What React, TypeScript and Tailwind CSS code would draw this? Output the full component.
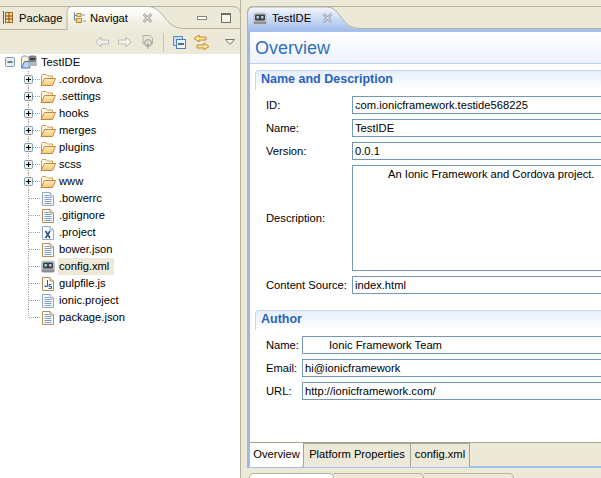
import React from "react";

const font = { fontFamily: '"Liberation Sans", Arial, sans-serif' };

function FolderIcon() {
  return (
    <svg width="16" height="13" viewBox="0 0 16 13" className="shrink-0">
      <defs>
        <linearGradient id="ff" x1="0" y1="0" x2="0" y2="1">
          <stop offset="0" stopColor="#fdeec4" />
          <stop offset="1" stopColor="#f5c670" />
        </linearGradient>
      </defs>
      <path d="M1.5 11.5V2.5L2.5 1.5H6L7.5 3H12.5V5.5" fill="#fff8e4" stroke="#cf9a4e" />
      <path d="M1 12.5L4.5 5.5H15.5L12.5 12.5Z" fill="url(#ff)" stroke="#c4873a" />
    </svg>
  );
}

function ProjectIcon() {
  return (
    <svg width="16" height="15" viewBox="0 0 16 15" className="shrink-0">
      <path d="M0.5 12.5V3L2 1H5.5L7 2.5H11V6" fill="#fdf4d8" stroke="#7f9cc8" />
      <path d="M0.5 13L3.5 6.5H11L8.5 13Z" fill="#bcd3f2" stroke="#3f6fb0" />
      <rect x="7.5" y="0.5" width="8" height="7" rx="2" fill="#7d8186" />
      <rect x="9" y="3" width="5" height="2" fill="#3a3e44" />
      <rect x="7" y="7" width="9" height="4" rx="1" fill="#b3b6ba" />
    </svg>
  );
}

function FileIcon({ edge = "#b0904e", kind = "lines" }: { edge?: string; kind?: "lines" | "x" | "js" }) {
  return (
    <svg width="12" height="14" viewBox="0 0 12 14" className="shrink-0">
      <path d="M0.5 0.5H8L11.5 4V13.5H0.5Z" fill="#fbfcff" stroke={edge} />
      <path d="M8 0.5V4H11.5" fill="#dfe8f6" stroke={edge} />
      {kind === "lines" && <path d="M2.5 3.5H7M2.5 5.5H9.5M2.5 7.5H9.5M2.5 9.5H9.5M2.5 11.5H9.5" stroke="#7d9ed2" />}
      {kind === "x" && <path d="M3.5 5L8 12M8 5L3.5 12" stroke="#2f4f86" strokeWidth="1.6" fill="none" />}
      {kind === "js" && <path d="M5.5 3V9.5H3V8M7 7.5H9.5M7 7.5V9.5H9.5V11.5H6.5" stroke="#2f5fae" fill="none" />}
    </svg>
  );
}

function RobotIcon() {
  return (
    <svg width="14" height="13" viewBox="0 0 14 13" className="shrink-0">
      <rect x="0" y="0.5" width="14" height="12.5" rx="3" fill="#c3c5c8" />
      <rect x="2" y="2.5" width="10" height="6" rx="1" fill="#3c4046" />
      <rect x="3.5" y="4" width="2.5" height="2.5" fill="#a9cfe0" />
      <rect x="8" y="4" width="2.5" height="2.5" fill="#a9cfe0" />
      <rect x="1" y="9.5" width="12" height="2.5" fill="#8d9095" />
    </svg>
  );
}

function Gutter({ box, last }: { box: boolean; last?: boolean }) {
  return (
    <svg width="40" height="17" viewBox="0 0 40 17" className="shrink-0">
      <path d={last ? "M28.5 0V8.5" : "M28.5 0V17"} stroke="#a5a38f" strokeDasharray="1 1" />
      <path d="M29 8.5H40" stroke="#a5a38f" strokeDasharray="1 1" />
      {box && (
        <g>
          <rect x="24.5" y="4.5" width="8" height="8" rx="1" fill="#efeee2" stroke="#7f9db9" />
          <path d="M26 8.5H31M28.5 6V11" stroke="#000000" />
        </g>
      )}
    </svg>
  );
}

const folders = [".cordova", ".settings", "hooks", "merges", "plugins", "scss", "www"];

function TreeRow({ label, icon, box, selected, last }: { label: string; icon: React.ReactNode; box?: boolean; selected?: boolean; last?: boolean }) {
  return (
    <div className="flex h-[17px] items-center">
      <Gutter box={!!box} last={last} />
      <div className="flex w-[18px] shrink-0 justify-center pr-[2px]">{icon}</div>
      <span className={`flex h-[17px] items-center px-[1px] text-[11.2px] text-black ${selected ? "bg-[#ece9d8] pr-[5px]" : ""}`}>{label}</span>
    </div>
  );
}

function Field({ label, value, labelW, mt, indent, caret }: { label: string; value: string; labelW: number; mt: string; indent?: boolean; caret?: boolean }) {
  return (
    <div className={`flex h-[18px] items-center ${mt}`}>
      <span className="shrink-0 pl-[16px] text-[11.2px] text-black" style={{ width: labelW }}>{label}</span>
      <div className="relative flex h-[18px] w-[400px] shrink-0 items-center border border-[#7598b8] bg-white pl-[2px] text-[11.2px] text-black">
        {indent && <span className="w-[24px] shrink-0" />}
        {value}
        {caret && <span className="absolute left-[2px] top-[7px] h-[2px] w-[2px] bg-white" />}
      </div>
    </div>
  );
}

function SectionHead({ title }: { title: string }) {
  return (
    <div className="ml-[5px] flex h-[20px] items-center rounded-tl-[4px] border-l border-t border-[#c5d6f0] bg-gradient-to-b from-[#e6eefb] to-white pb-[3px] pl-[5px] text-[12.5px] font-bold text-[#2a63bd]">
      {title}
    </div>
  );
}

function BottomTab({ label, w, active }: { label: string; w: string; active?: boolean }) {
  return (
    <div className={`flex h-[24px] items-center justify-center border-r pb-[2px] text-[11.2px] text-black ${w} ${active ? "rounded-br-[3px] border-[#a6a38f] bg-white" : "border-t border-[#a6a38f] bg-[#ece9d8]"}`}>
      {label}
    </div>
  );
}

export default function App() {
  return (
    <div className="flex h-[478px] w-[601px] overflow-hidden bg-[#ece9d8]" style={font}>
      {/* Left view */}
      <div className="flex h-full w-[241px] shrink-0 flex-col border-r border-[#b4b19c]">
        <div className="relative h-[30px] shrink-0">
          <svg width="241" height="30" viewBox="0 0 241 30" className="absolute left-0 top-0">
            <defs>
              <linearGradient id="lt" x1="0" y1="0" x2="0" y2="1">
                <stop offset="0" stopColor="#ffffff" />
                <stop offset="1" stopColor="#ece9d8" />
              </linearGradient>
            </defs>
            <path d="M0 6.5H232Q240.5 6.5 240.5 14V30" fill="none" stroke="#b4b19c" />
            <path d="M67 30V12Q67 6.5 73 6.5H148C164 6.5 164 28.5 184 28.5H240" fill="url(#lt)" stroke="#b4b19c" />
            <path d="M0 29.5H67" stroke="#b4b19c" />
          </svg>
          <div className="relative flex h-[30px] items-center pt-[6px] text-[11.2px] text-black">
            <div className="flex w-[67px] items-center pl-[3px]">
              <svg width="10" height="13" viewBox="0 0 10 13" className="mr-[6px] shrink-0">
                <path d="M0.5 0V13" stroke="#3d6a8f" />
                <rect x="2.5" y="1.5" width="7" height="10" fill="#f4d9a4" stroke="#a86818" />
                <path d="M2.5 5H9.5M2.5 8H9.5M6 1.5V11.5" stroke="#8a4a10" />
              </svg>
              <span>Package</span>
            </div>
            <div className="flex items-center pl-[6px]">
              <svg width="13" height="12" viewBox="0 0 13 12" className="mr-[4px] shrink-0">
                <path d="M1.5 0.5V3.5M1.5 3.5H4M1.5 3.5V8H3" stroke="#5a7fa8" fill="none" />
                <rect x="4" y="1.5" width="4" height="3" fill="#f5d88a" stroke="#b98a3a" />
                <rect x="3.5" y="6.5" width="5" height="4" fill="#f5d88a" stroke="#b98a3a" />
                <path d="M9 3H12M10 9H13" stroke="#6f97c9" />
              </svg>
              <span>Navigat</span>
              <svg width="11" height="10" viewBox="0 0 11 10" className="ml-[14px] shrink-0">
                <path d="M1.5 1L9.5 9M9.5 1L1.5 9" stroke="#9b9b95" strokeWidth="2.6" />
                <path d="M1.5 1L9.5 9M9.5 1L1.5 9" stroke="#ffffff" strokeWidth="1" />
              </svg>
            </div>
            <div className="ml-[44px] flex items-center gap-[14px]">
              <div className="h-[4px] w-[10px] border border-[#8a8878] bg-white" />
              <div className="h-[10px] w-[10px] border border-[#6e6d60] border-t-2 bg-[#f7f6ef]" />
            </div>
          </div>
        </div>
        <div className="flex h-[24px] shrink-0 items-center pl-[95px]">
          <svg width="14" height="12" viewBox="0 0 14 12" className="shrink-0">
            <path d="M6 1L0.8 6L6 11V8H13.5V4H6Z" fill="#f3f2ea" stroke="#bcbcb2" />
          </svg>
          <svg width="14" height="12" viewBox="0 0 14 12" className="ml-[9px] shrink-0">
            <path d="M8 1L13.2 6L8 11V8H0.5V4H8Z" fill="#f3f2ea" stroke="#bcbcb2" />
          </svg>
          <svg width="13" height="14" viewBox="0 0 13 14" className="ml-[9px] shrink-0">
            <path d="M2 0.5H9L11.5 3V9H2Z" fill="#e5e5dc" stroke="#b3b3a8" />
            <circle cx="7" cy="8" r="3.5" fill="#d8d8ce" stroke="#a3a398" />
            <path d="M7 14V9L5 11" stroke="#9a9a90" fill="none" />
          </svg>
          <div className="ml-[9px] h-[19px] w-[1px] bg-[#c9c6b4]" />
          <svg width="13" height="13" viewBox="0 0 13 13" className="ml-[9px] shrink-0">
            <rect x="0.5" y="0.5" width="9" height="9" fill="#c9dcf2" stroke="#5f8fc0" />
            <rect x="3.5" y="3.5" width="9" height="9" fill="#eef4fb" stroke="#4a80b8" />
            <path d="M5 8H11" stroke="#1f4f8a" strokeWidth="1.6" />
          </svg>
          <svg width="17" height="17" viewBox="0 0 17 17" className="ml-[7px] shrink-0">
            <path d="M6 1L1 4.5L6 8V6H13V3H6Z" fill="#fbe6a8" stroke="#c48a1e" />
            <path d="M11 9L16 12.5L11 16V14H4V11H11Z" fill="#fbe6a8" stroke="#c48a1e" />
          </svg>
          <svg width="10" height="6" viewBox="0 0 10 6" className="ml-[15px] shrink-0">
            <path d="M0.5 0.5H9.5L5 5.5Z" fill="#f8f8f2" stroke="#77766a" />
          </svg>
        </div>
        <div className="flex-1 bg-white">
          <div className="flex h-[17px] items-center pb-[1px] pl-[5px]">
            <svg width="10" height="10" viewBox="0 0 10 10" className="shrink-0">
              <rect x="0.5" y="0.5" width="9" height="9" rx="1" fill="#e8edf2" stroke="#7f9db9" />
              <path d="M2.5 5H7.5" stroke="#000000" />
            </svg>
            <div className="ml-[6px] flex w-[20px] shrink-0"><ProjectIcon /></div>
            <span className="text-[11.2px] text-black">TestIDE</span>
          </div>
          {folders.map((f) => (
            <TreeRow key={f} label={f} box icon={<FolderIcon />} />
          ))}
          <TreeRow label=".bowerrc" icon={<FileIcon edge="#8fa8c8" />} />
          <TreeRow label=".gitignore" icon={<FileIcon />} />
          <TreeRow label=".project" icon={<FileIcon edge="#8fa8c8" kind="x" />} />
          <TreeRow label="bower.json" icon={<FileIcon />} />
          <TreeRow label="config.xml" icon={<RobotIcon />} selected />
          <TreeRow label="gulpfile.js" icon={<FileIcon kind="js" />} />
          <TreeRow label="ionic.project" icon={<FileIcon edge="#8fa8c8" />} />
          <TreeRow label="package.json" icon={<FileIcon />} last />
        </div>
      </div>

      {/* Gap */}
      <div className="w-[6px] shrink-0" />

      {/* Editor */}
      <div className="flex h-full w-[354px] shrink-0 flex-col">
        <div className="relative h-[30px] shrink-0">
          <svg width="354" height="30" viewBox="0 0 354 30" className="absolute left-0 top-0">
            <defs>
              <linearGradient id="rt" x1="0" y1="0" x2="0" y2="1">
                <stop offset="0" stopColor="#f4f7fd" />
                <stop offset="1" stopColor="#a4c0ee" />
              </linearGradient>
            </defs>
            <path d="M0.5 30V12Q0.5 6.5 6 6.5H354" fill="none" stroke="#b4b19c" />
            <path d="M1 30V12Q1 7 6 7H80C94 7 94 29 112 29H354V30H1Z" fill="url(#rt)" />
            <path d="M1 12Q1 7 6 7H80C94 7 94 28.5 112 28.5H354" fill="none" stroke="#b4b19c" />
          </svg>
          <div className="relative flex h-[30px] items-center pl-[6px] pt-[6px] text-[11.2px] text-black">
            <RobotIcon />
            <span className="ml-[5px]">TestIDE</span>
            <svg width="11" height="10" viewBox="0 0 11 10" className="ml-[11px] shrink-0">
              <path d="M1.5 1L9.5 9M9.5 1L1.5 9" stroke="#8f9aa8" strokeWidth="2.6" />
              <path d="M1.5 1L9.5 9M9.5 1L1.5 9" stroke="#ffffff" strokeWidth="1" />
            </svg>
          </div>
        </div>
        <div className="flex h-[438px] shrink-0 flex-col border-b-2 border-l-[3px] border-t-2 border-[#a4c0ee] border-l-[#9db9ea] bg-white">
          <div className="flex h-[32px] shrink-0 items-center border-b border-[#bcd2f4] bg-gradient-to-b from-white to-[#edf3fc] pl-[5px] pt-[1px] text-[18px] text-[#2f6fc6]">
            Overview
          </div>
          <div className="mt-[6px] flex-1">
            <SectionHead title="Name and Description" />
            <Field label="ID:" value="com.ionicframework.testide568225" labelW={102} mt="mt-[6px]" caret />
            <Field label="Name:" value="TestIDE" labelW={102} mt="mt-[5px]" />
            <Field label="Version:" value="0.0.1" labelW={102} mt="mt-[5px]" />
            <div className="mt-[5px] flex h-[106px] items-center">
              <span className="w-[102px] shrink-0 pl-[16px] text-[11.2px] text-black">Description:</span>
              <div className="h-[106px] w-[400px] shrink-0 border border-[#7598b8] bg-white pl-[35px] text-[11.2px] text-black">
                An Ionic Framework and Cordova project.
              </div>
            </div>
            <Field label="Content Source:" value="index.html" labelW={102} mt="mt-[5px]" />
            <div className="mt-[16px]">
              <SectionHead title="Author" />
            </div>
            <Field label="Name:" value="Ionic Framework Team" labelW={52} mt="mt-[6px]" indent />
            <Field label="Email:" value="hi@ionicframework" labelW={52} mt="mt-[5px]" />
            <Field label="URL:" value="http://ionicframework.com/" labelW={52} mt="mt-[5px]" />
          </div>
          <div className="flex h-[24px] shrink-0 border-t border-[#a6a38f] bg-[#ece9d8]">
            <BottomTab label="Overview" w="w-[54px]" active />
            <BottomTab label="Platform Properties" w="w-[107px]" />
            <BottomTab label="config.xml" w="w-[59px]" />
          </div>
        </div>
        <div className="mt-[5px] flex h-[5px] shrink-0 pl-[2px]">
          <div className="h-[5px] w-[85px] rounded-t-[5px] border-l border-r border-t border-[#b4b19c] bg-white" />
          <div className="h-[5px] w-[90px] rounded-tr-[5px] border-r border-t border-[#b4b19c]" />
          <div className="h-[5px] w-[90px] rounded-tr-[5px] border-r border-t border-[#b4b19c]" />
        </div>
      </div>
    </div>
  );
}
